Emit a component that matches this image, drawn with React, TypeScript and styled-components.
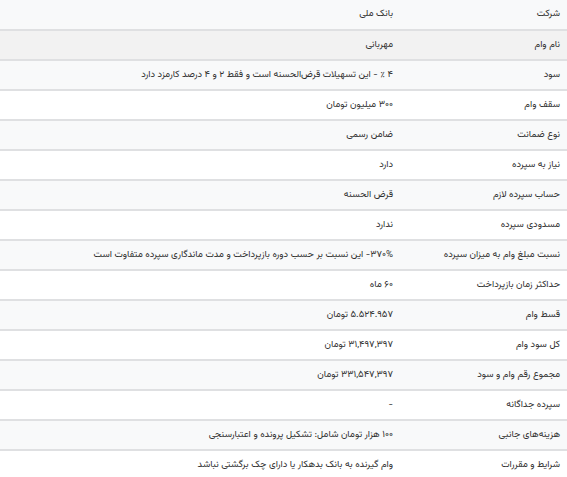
import React from 'react';
import styled, { createGlobalStyle } from 'styled-components';

type Row = {
  label: string;
  value: string;
};

const rows: Row[] = [
  { label: 'شرکت', value: 'بانک ملی' },
  { label: 'نام وام', value: 'مهربانی' },
  { label: 'سود', value: '۴ ٪ - این تسهیلات قرض‌الحسنه است و فقط ۲ و ۴ درصد کارمزد دارد' },
  { label: 'سقف وام', value: '۳۰۰ میلیون تومان' },
  { label: 'نوع ضمانت', value: 'ضامن رسمی' },
  { label: 'نیاز به سپرده', value: 'دارد' },
  { label: 'حساب سپرده لازم', value: 'قرض الحسنه' },
  { label: 'مسدودی سپرده', value: 'ندارد' },
  {
    label: 'نسبت مبلغ وام به میزان سپرده',
    value: '۳۷۰%- این نسبت بر حسب دوره بازپرداخت و مدت ماندگاری سپرده متفاوت است',
  },
  { label: 'حداکثر زمان بازپرداخت', value: '۶۰ ماه' },
  { label: 'قسط وام', value: '۵.۵۲۴.۹۵۷ تومان' },
  { label: 'کل سود وام', value: '۳۱,۴۹۷,۳۹۷ تومان' },
  { label: 'مجموع رقم وام و سود', value: '۳۳۱,۵۴۷,۳۹۷ تومان' },
  { label: 'سپرده جداگانه', value: '-' },
  { label: 'هزینه‌های جانبی', value: '۱۰۰ هزار تومان شامل: تشکیل پرونده و اعتبارسنجی' },
  { label: 'شرایط و مقررات', value: 'وام گیرنده به بانک بدهکار یا دارای چک برگشتی نباشد' },
];

const GlobalStyle = createGlobalStyle`
  html, body {
    margin: 0;
    padding: 0;
    background: #fff;
  }
  body {
    font-family: 'Vazirmatn', 'Noto Sans Arabic', 'DejaVu Sans', sans-serif;
  }
`;

const App = () => {
  return (
    <>
      <GlobalStyle />
      <Table dir="rtl">
        <tbody>
          {rows.map((r, i) => (
            <TableRow key={r.label} hovered={i === 1}>
              <LabelCell>{r.label}</LabelCell>
              <ValueCell>{r.value}</ValueCell>
            </TableRow>
          ))}
        </tbody>
      </Table>
    </>
  );
};

const Table = styled.table`
  width: 100%;
  border-collapse: collapse;
  font-size: 9.5px;
  color: #2f2f2f;
`;

const TableRow = styled.tr<{ hovered?: boolean }>`
  height: 30px;
  background: #fff;
  border-bottom: 2px solid #dfe0e2;

  &:nth-child(odd) {
    background: #f8f9fa;
  }

  ${(p) => p.hovered && 'background: #f2f2f2 !important;'}
`;

const LabelCell = styled.td`
  width: 151px;
  padding: 0 7px 2px 8px;
  text-align: right;
  vertical-align: middle;
  white-space: nowrap;
`;

const ValueCell = styled.td`
  padding: 0 8px 2px;
  text-align: right;
  vertical-align: middle;
  white-space: nowrap;
`;

export default App;
